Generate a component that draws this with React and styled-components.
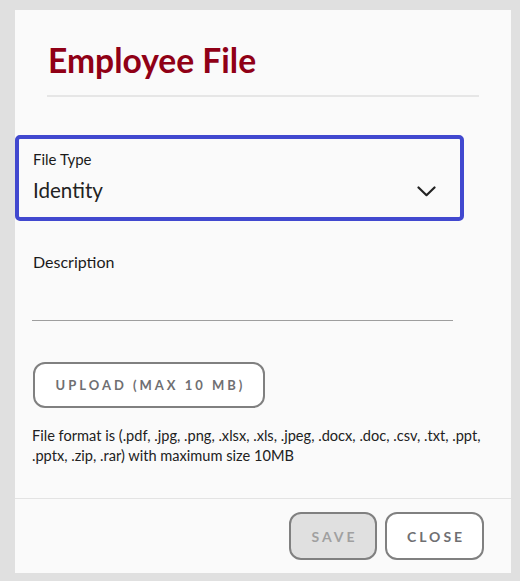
import React from "react";
import styled, { createGlobalStyle } from "styled-components";

const Global = createGlobalStyle`
  html, body { margin: 0; padding: 0; background: #e0e0e0; }
  body { font-family: Lato, "Open Sans", sans-serif; }
  * { box-sizing: border-box; }
`;

const Page = styled.div`
  padding: 10px 9px 8px 15px;
`;

const Card = styled.div`
  width: 496px;
  height: 563px;
  background: #fafafa;
  display: flex;
  flex-direction: column;
`;

const Header = styled.div`
  padding: 30px 32px 0;
`;

const Title = styled.h2`
  margin: 0;
  font-size: 33.6px;
  line-height: 41px;
  font-weight: 700;
  color: #900016;
  padding: 0 0 14px 1px;
  border-bottom: 2px solid #e6e6e6;
`;

const SelectBox = styled.div`
  margin: 42px 51px 0 4px;
  outline: 4px solid #4148cf;
  border-radius: 1px;
  padding: 12px 24px 15px 14px;
`;

const SmallLabel = styled.div`
  font-size: 15px;
  line-height: 17px;
  color: #1a1a1a;
`;

const SelectRow = styled.div`
  margin-top: 10px;
  display: flex;
  align-items: center;
  justify-content: space-between;
`;

const SelectValue = styled.div`
  font-size: 20.6px;
  line-height: 24px;
  color: #222;
`;

const Chevron = styled.svg`
  display: block;
  margin-top: 2px;
`;

const TextField = styled.div`
  margin: 35px 58px 0 17px;
`;

const FieldLabel = styled.div`
  font-size: 16px;
  line-height: 19px;
  color: #1a1a1a;
  padding-left: 1px;
`;

const Underline = styled.div`
  height: 50px;
  border-bottom: 1px solid #9e9e9e;
`;

const OutlineButton = styled.button`
  font-family: Lato, "Open Sans", sans-serif;
  font-weight: 700;
  font-size: ${(p) => p.$size || 13}px;
  letter-spacing: 3px;
  text-transform: uppercase;
  border: 2px solid #808080;
  border-radius: 12px;
  background: ${(p) => (p.$disabled ? "#e0e0e0" : "#ffffff")};
  color: ${(p) => (p.$disabled ? "#a0a0a0" : "#6f6f72")};
  height: ${(p) => p.$h}px;
  width: ${(p) => p.$w}px;
  padding: 0 0 0 3px;
  display: flex;
  align-items: center;
  justify-content: center;
  cursor: pointer;
`;

const UploadWrap = styled.div`
  margin: 41px 0 0 18px;
`;

const Helper = styled.p`
  margin: 18px 18px 0 17px;
  font-size: 14.6px;
  line-height: 20px;
  color: #222;
`;

const Footer = styled.div`
  margin-top: auto;
  border-top: 1px solid #e3e3e3;
  padding: 13px 27px 13px;
  display: flex;
  justify-content: flex-end;
  gap: 8px;
`;

export default function App() {
  return (
    <>
      <Global />
      <Page>
        <Card>
          <Header>
            <Title>Employee File</Title>
          </Header>
          <SelectBox>
            <SmallLabel>File Type</SmallLabel>
            <SelectRow>
              <SelectValue>Identity</SelectValue>
              <Chevron width="19" height="11" viewBox="0 0 19 11">
                <polyline
                  points="1.5,1.5 9.5,9.2 17.5,1.5"
                  fill="none"
                  stroke="#222"
                  strokeWidth="2.2"
                  strokeLinecap="round"
                  strokeLinejoin="round"
                />
              </Chevron>
            </SelectRow>
          </SelectBox>
          <TextField>
            <FieldLabel>Description</FieldLabel>
            <Underline />
          </TextField>
          <UploadWrap>
            <OutlineButton $w={232} $h={46}>
              Upload (Max 10 MB)
            </OutlineButton>
          </UploadWrap>
          <Helper>
            File format is (.pdf, .jpg, .png, .xlsx, .xls, .jpeg, .docx, .doc, .csv, .txt, .ppt,
            .pptx, .zip, .rar) with maximum size 10MB
          </Helper>
          <Footer>
            <OutlineButton $w={88} $h={48} $size={14} $disabled>
              Save
            </OutlineButton>
            <OutlineButton $w={99} $h={48} $size={14}>
              Close
            </OutlineButton>
          </Footer>
        </Card>
      </Page>
    </>
  );
}
